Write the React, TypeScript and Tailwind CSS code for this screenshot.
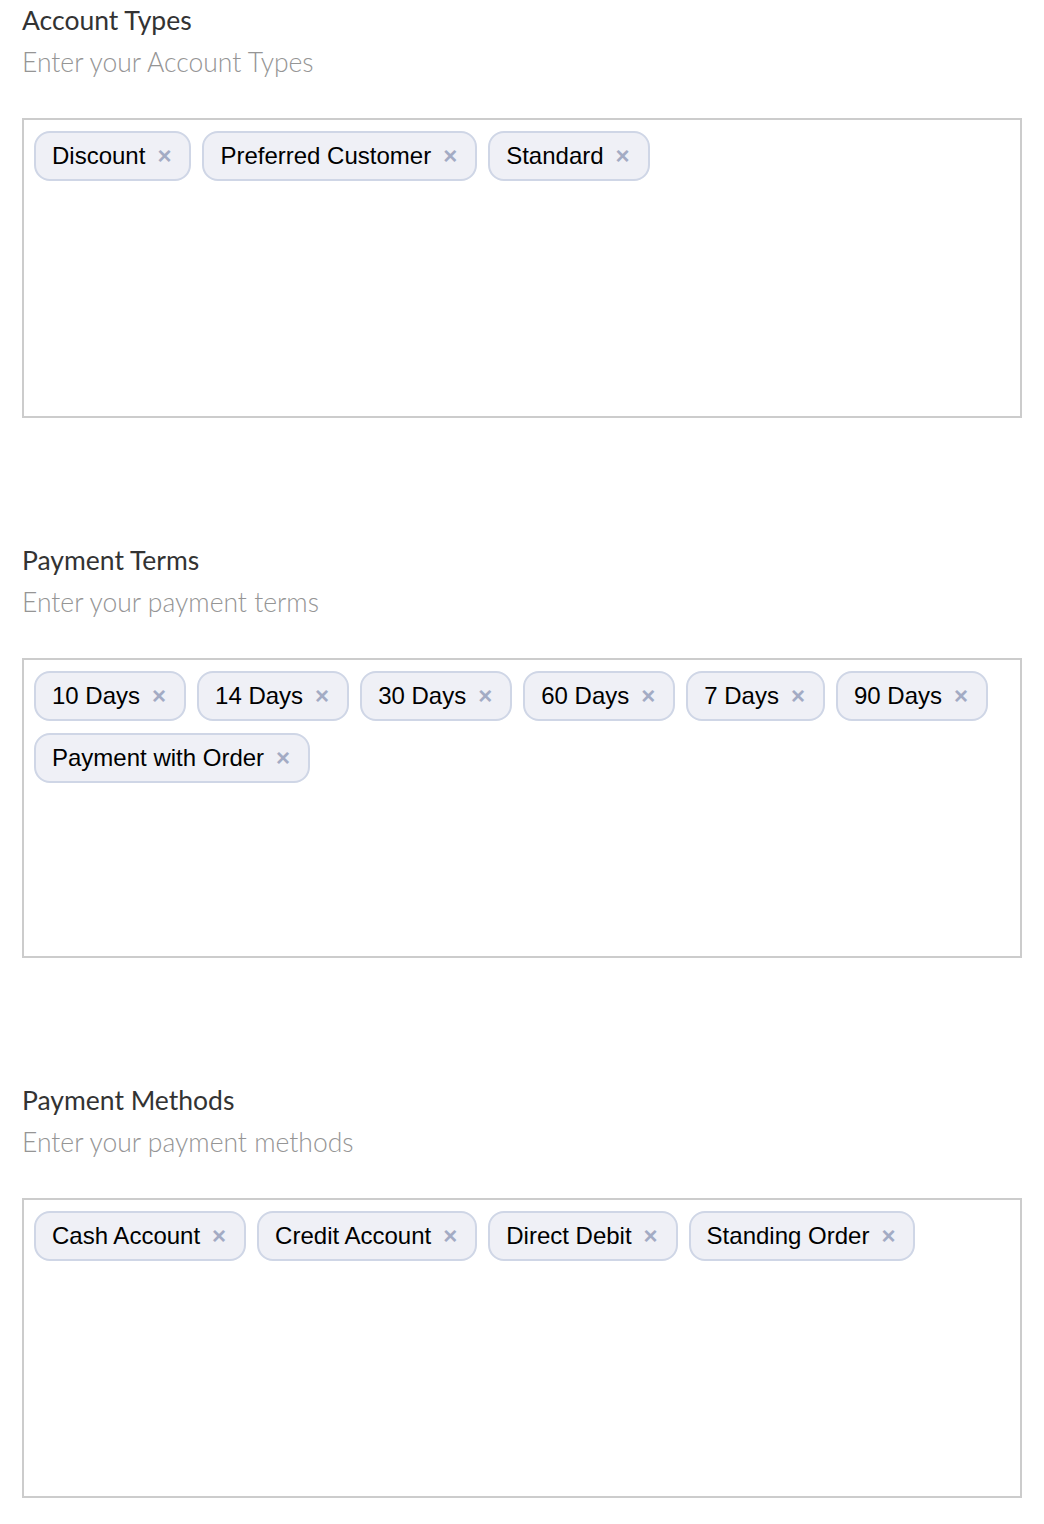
const SECTIONS = [
  {
    title: "Account Types",
    hint: "Enter your Account Types",
    tags: ["Discount", "Preferred Customer", "Standard"],
  },
  {
    title: "Payment Terms",
    hint: "Enter your payment terms",
    tags: ["10 Days", "14 Days", "30 Days", "60 Days", "7 Days", "90 Days", "Payment with Order"],
  },
  {
    title: "Payment Methods",
    hint: "Enter your payment methods",
    tags: ["Cash Account", "Credit Account", "Direct Debit", "Standing Order"],
  },
];

function Tag({ label }: { label: string }) {
  return (
    <span className="flex h-[50px] items-center rounded-[16px] border-2 border-[#cfd6e6] bg-[#eff0f6] pl-4 pr-[18px] font-['Liberation_Sans',Arial,sans-serif] text-[24px] text-black">
      {label}
      <button type="button" className="ml-3 text-[24px] font-bold leading-none text-[#a3abc4]">
        ×
      </button>
    </span>
  );
}

export default function App() {
  return (
    <div className="min-h-[1524px] bg-white px-[22px] font-['Lato','Noto_Sans',sans-serif]">
      {SECTIONS.map((s) => (
        <section key={s.title} className="mb-[122px] w-[1000px] last:mb-0">
          <h3 className="text-[26.5px] leading-[40px] text-[#333]">{s.title}</h3>
          <p className="text-[26.5px] font-light leading-[44px] text-[#959595]">{s.hint}</p>
          <div className="mt-[34px] flex h-[300px] flex-wrap content-start gap-x-[11px] gap-y-[12px] border-2 border-[#cccccc] px-[10px] pt-[11px]">
            {s.tags.map((t) => (
              <Tag key={t} label={t} />
            ))}
          </div>
        </section>
      ))}
    </div>
  );
}
